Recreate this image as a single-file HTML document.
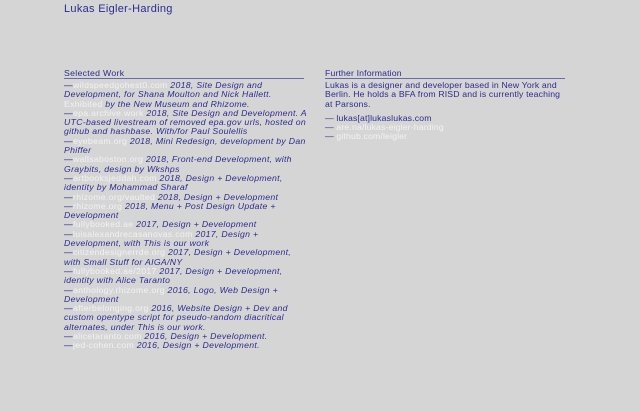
<!DOCTYPE html>
<html><head><meta charset="utf-8"><style>
html,body{margin:0;padding:0;background:#d5d5d5;width:640px;height:412px;overflow:hidden}
body{font-family:"Liberation Sans",sans-serif;color:#2b2b8f;position:relative}
h1{position:absolute;left:64px;top:3px;margin:0;font-size:11px;font-weight:normal;letter-spacing:0.3px}
.col{position:absolute;top:68px;width:260px;font-size:8.7px;line-height:9.3px;letter-spacing:0.31px;white-space:nowrap}
.hd{border-bottom:1px solid #6a6aa8;margin-bottom:2px;line-height:10px;width:240px}
.l{color:#f2f2f2;font-style:normal}
.i{font-style:italic}
p{margin:0}
</style></head><body>
<h1>Lukas Eigler-Harding</h1>
<div class="col" style="left:64px">
<div class="hd">Selected Work</div>
<p class="i">—<span class="l">wildspeedgohest0.com</span> 2018, Site Design and<br>Development, for Shana Moulton and Nick Hallett.<br><span class="l">Exhibited</span> by the New Museum and Rhizome.<br>—<span class="l">epa.archive.work</span> 2018, Site Design and Development. A<br>UTC-based livestream of removed epa.gov urls, hosted on<br>github and hashbase. With/for Paul Soulellis<br>—<span class="l">eyebeam.org</span> 2018, Mini Redesign, development by Dan<br>Phiffer<br>—<span class="l">wallsaboston.org</span> 2018, Front-end Development, with<br>Graybits, design by Wkshps<br>—<span class="l">artbooksjeddah.com</span> 2018, Design + Development,<br>identity by Mohammad Sharaf<br>—<span class="l">rhizome.org/vaulted</span> 2018, Design + Development<br>—<span class="l">rhizome.org</span> 2018, Menu + Post Design Update +<br>Development<br>—<span class="l">fullybooked.ae</span> 2017, Design + Development<br>—<span class="l">luisalexandrecasanovas.com</span> 2017, Design +<br>Development, with This is our work<br>—<span class="l">citizendesignerrde.org</span> 2017, Design + Development,<br>with Small Stuff for AIGA/NY<br>—<span class="l">fullybooked.ae/2017</span> 2017, Design + Development,<br>identity with Alice Taranto<br>—<span class="l">anthology.rhizome.org</span> 2016, Logo, Web Design +<br>Development<br>—<span class="l">afterbelonging.org</span> 2016, Website Design + Dev and<br>custom opentype script for pseudo-random diacritical<br>alternates, under This is our work.<br>—<span class="l">alicetaranto.com</span> 2016, Design + Development.<br>—<span class="l">jed-cohen.com</span> 2016, Design + Development.</p>
</div>
<div class="col" style="left:325px;letter-spacing:0.15px">
<div class="hd">Further Information</div>
<p>Lukas is a designer and developer based in New York and<br>Berlin. He holds a BFA from RISD and is currently teaching<br>at Parsons.</p>
<p style="margin-top:5px">— lukas[at]lukaslukas.com<br>— <span class="l">are.na/lukas-eigler-harding</span><br>— <span class="l">github.com/leigler</span></p>
</div>
</body></html>
